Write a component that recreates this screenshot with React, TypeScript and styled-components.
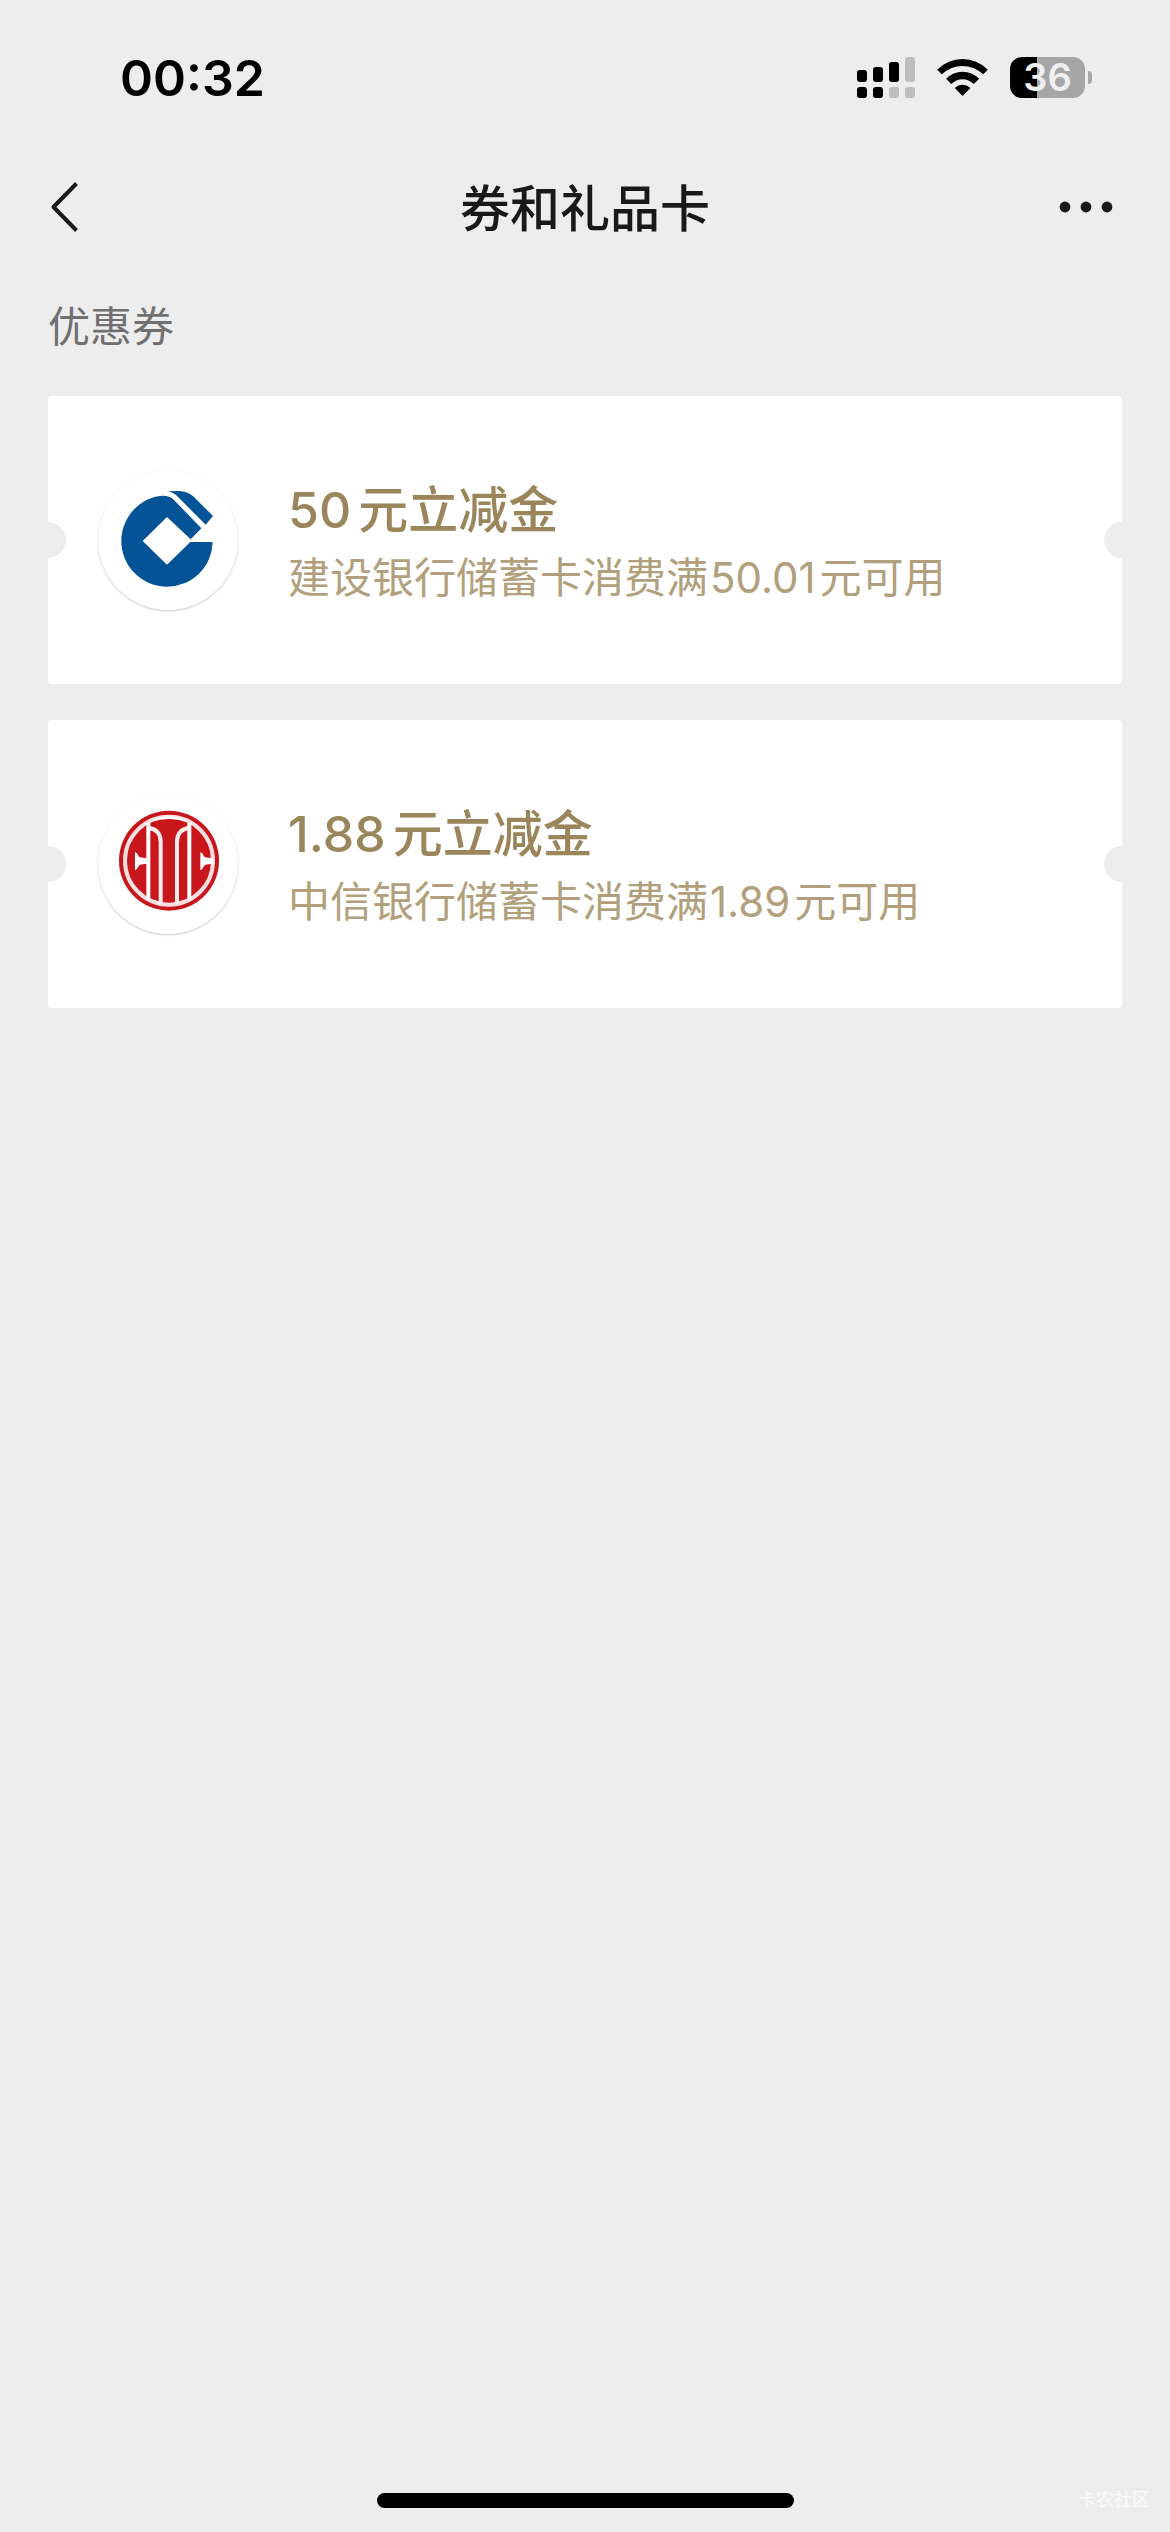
import React from 'react';
import styled, { createGlobalStyle } from 'styled-components';

const GlobalStyle = createGlobalStyle`
  * {
    box-sizing: border-box;
  }
  body {
    margin: 0;
    background: #ededed;
    font-family: Inter, 'Noto Sans CJK SC', sans-serif;
  }
`;

const Screen = styled.div`
  display: flex;
  flex-direction: column;
  min-height: 100vh;
`;

const StatusBar = styled.div`
  display: flex;
  align-items: center;
  justify-content: space-between;
  height: 141px;
  padding: 14px 78px 0 120px;
  color: #000;
`;

const Clock = styled.time`
  font-size: 50px;
  line-height: 60px;
  font-weight: 600;
`;

const StatusIcons = styled.div`
  display: flex;
  align-items: center;
  gap: 22px;
`;

const Battery = styled.div`
  display: flex;
  align-items: center;
  gap: 3px;
`;

const BatteryBody = styled.div<{ $level: number }>`
  display: flex;
  align-items: center;
  justify-content: center;
  width: 75px;
  height: 41px;
  border-radius: 12px;
  background: linear-gradient(to right, #000 ${(p) => p.$level}%, #a6a6a6 ${(p) => p.$level}%);
  color: #f0f0f0;
  font-size: 38px;
  line-height: 41px;
  font-weight: 600;
`;

const BatteryTip = styled.div`
  width: 4px;
  height: 13px;
  border-radius: 0 4px 4px 0;
  background: #a6a6a6;
`;

const NavBar = styled.header`
  display: grid;
  grid-template-columns: 1fr auto 1fr;
  align-items: center;
  height: 132px;
  padding: 0 48px;
`;

const NavTitle = styled.h1`
  margin: 0;
  padding-top: 4px;
  color: #191919;
  font-size: 50px;
  line-height: 72px;
  font-weight: 500;
`;

const NavButton = styled.button<{ $side: 'start' | 'end' }>`
  display: flex;
  justify-self: ${(p) => p.$side};
  padding: ${(p) => (p.$side === 'end' ? '0 9px' : '0')};
  border: 0;
  background: none;
  color: #191919;
  cursor: pointer;
`;

const Content = styled.main`
  flex: 1;
  padding: 22px 48px 0;
`;

const SectionTitle = styled.h2`
  margin: 0 0 37px;
  color: #707070;
  font-size: 42px;
  line-height: 64px;
  font-weight: 400;
`;

const CouponList = styled.ul`
  display: flex;
  flex-direction: column;
  gap: 36px;
  margin: 0;
  padding: 0;
  list-style: none;
`;

const CouponCard = styled.li`
  position: relative;
  display: flex;
  align-items: center;
  gap: 50px;
  height: 288px;
  padding: 0 50px;
  overflow: hidden;
  border-radius: 3px;
  background: #fff;

  &::before,
  &::after {
    content: '';
    position: absolute;
    top: 50%;
    width: 36px;
    height: 36px;
    margin-top: -18px;
    border-radius: 50%;
    background: #ededed;
  }
  &::before {
    left: -18px;
  }
  &::after {
    right: -18px;
  }
`;

const LogoDisc = styled.div`
  flex: none;
  width: 140px;
  height: 140px;
  border-radius: 50%;
  background: #fff;
  box-shadow: 0 1px 2px rgba(0, 0, 0, 0.22);

  svg {
    display: block;
  }
`;

const CouponText = styled.div`
  display: flex;
  flex-direction: column;
  padding-top: 4px;
`;

const CouponName = styled.h3`
  margin: 0;
  color: #9b855b;
  font-size: 50px;
  line-height: 72px;
  font-weight: 500;
`;

const CouponRule = styled.p`
  margin: 0;
  color: #b2a07c;
  font-size: 42px;
  line-height: 64px;
`;

const Amount = styled.span<{ $inline?: boolean }>`
  margin-right: ${(p) => (p.$inline ? '4px' : '7px')};
  margin-left: ${(p) => (p.$inline ? '2px' : '0')};
`;

const Footer = styled.footer`
  display: grid;
  grid-template-columns: 1fr auto 1fr;
  align-items: center;
  padding: 0 20px 18px;
`;

const HomeIndicator = styled.div`
  grid-column: 2;
  width: 417px;
  height: 15px;
  border-radius: 8px;
  background: #000;
`;

const Watermark = styled.span`
  justify-self: end;
  color: #fafafa;
  font-size: 18px;
  line-height: 28px;
`;

function SignalIcon() {
  return (
    <svg width="58" height="41" viewBox="0 0 58 41" aria-hidden="true">
      <rect x="0" y="13" width="10" height="12" rx="3" />
      <rect x="16" y="10" width="10" height="15" rx="3" />
      <rect x="32" y="5" width="10" height="20" rx="3" />
      <rect x="48" y="0" width="10" height="25" rx="3" fill="#bdbdbd" />
      <rect x="0" y="30" width="10" height="11" rx="3" />
      <rect x="16" y="30" width="10" height="11" rx="3" />
      <rect x="32" y="30" width="10" height="11" rx="3" fill="#bdbdbd" />
      <rect x="48" y="30" width="10" height="11" rx="3" fill="#bdbdbd" />
    </svg>
  );
}

function WifiIcon() {
  return (
    <svg width="51" height="37" viewBox="318 57 152 111" aria-hidden="true">
      <path d="M318 89 Q351 57 394 57 Q437 57 470 89 L456 103 Q428 78 394 78 Q360 78 332 103 Z" />
      <path d="M345 116 Q366 95 394 95 Q422 95 444 116 L428 132 Q413 118 394 118 Q375 118 360 132 Z" />
      <path d="M371 144 Q381 134 394 134 Q407 134 418 144 L394 168 Z" />
    </svg>
  );
}

function BackIcon() {
  return (
    <svg width="32" height="52" viewBox="0 0 32 52" fill="none" stroke="currentColor" strokeWidth="4" aria-hidden="true">
      <path d="M28.5 2.5 L5.5 26 L28.5 49.5" strokeLinejoin="round" />
    </svg>
  );
}

function MoreIcon() {
  return (
    <svg width="54" height="12" viewBox="0 0 54 12" fill="currentColor" aria-hidden="true">
      <circle cx="6" cy="6" r="5.4" />
      <circle cx="27" cy="6" r="5.4" />
      <circle cx="48" cy="6" r="5.4" />
    </svg>
  );
}

function CcbLogo() {
  return (
    <svg width="140" height="140" viewBox="174 240 420 420" fill="#045396" role="img" aria-label="建设银行">
      <path d="M484 415 L404 332 Q391 317 368 317 C298 321 244 384 244 453 A137 137 0 0 0 381 590 A137 137 0 0 0 518 456 L451 456 L381 524 L308 453 L381 381 L452 448 Z" />
      <path d="M385 304 Q402 302 418 303 Q444 305 462 321 L519 378 L497 404 L409 316 Q398 307 385 304 Z" />
    </svg>
  );
}

function CiticLogo() {
  return (
    <svg width="140" height="140" viewBox="174 42 420 420" role="img" aria-label="中信银行">
      <circle cx="387" cy="242" r="150" fill="#c8161d" />
      <circle cx="387" cy="242" r="132" fill="none" stroke="#fbdfe0" strokeWidth="12" />
      <path d="M326 126 Q387 92 448 126 Q387 108 326 126 Z" fill="#fff" />
      <g fill="none" stroke="#fff">
        <path d="M325 128 V359 M448 128 V359" strokeWidth="12" />
        <path d="M328 144 Q362 150 362 186 V372 M445 144 Q411 150 411 186 V372" strokeWidth="12" stroke="#fdeaea" />
      </g>
      <path d="M285 216 Q292 219 296 229 Q300 235 322 234 V252 Q300 251 296 258 Q292 268 285 271 Z" fill="#fff" />
      <path d="M481 216 Q488 219 492 229 Q496 235 520 234 V252 Q496 251 492 258 Q488 268 481 271 Z" fill="#fff" />
    </svg>
  );
}

interface Coupon {
  id: string;
  logo: React.ReactNode;
  value: string;
  bank: string;
  threshold: string;
}

const coupons: Coupon[] = [
  { id: 'ccb', logo: <CcbLogo />, value: '50', bank: '建设银行', threshold: '50.01' },
  { id: 'citic', logo: <CiticLogo />, value: '1.88', bank: '中信银行', threshold: '1.89' },
];

export default function App() {
  return (
    <Screen lang="zh-CN">
      <GlobalStyle />
      <StatusBar>
        <Clock>00:32</Clock>
        <StatusIcons>
          <SignalIcon />
          <WifiIcon />
          <Battery>
            <BatteryBody $level={36}>36</BatteryBody>
            <BatteryTip />
          </Battery>
        </StatusIcons>
      </StatusBar>
      <NavBar>
        <NavButton $side="start" type="button" aria-label="返回">
          <BackIcon />
        </NavButton>
        <NavTitle>券和礼品卡</NavTitle>
        <NavButton $side="end" type="button" aria-label="更多">
          <MoreIcon />
        </NavButton>
      </NavBar>
      <Content>
        <SectionTitle>优惠券</SectionTitle>
        <CouponList>
          {coupons.map((coupon) => (
            <CouponCard key={coupon.id}>
              <LogoDisc>{coupon.logo}</LogoDisc>
              <CouponText>
                <CouponName>
                  <Amount>{coupon.value}</Amount>元立减金
                </CouponName>
                <CouponRule>
                  {coupon.bank}储蓄卡消费满<Amount $inline>{coupon.threshold}</Amount>元可用
                </CouponRule>
              </CouponText>
            </CouponCard>
          ))}
        </CouponList>
      </Content>
      <Footer>
        <HomeIndicator />
        <Watermark>卡农社区</Watermark>
      </Footer>
    </Screen>
  );
}
